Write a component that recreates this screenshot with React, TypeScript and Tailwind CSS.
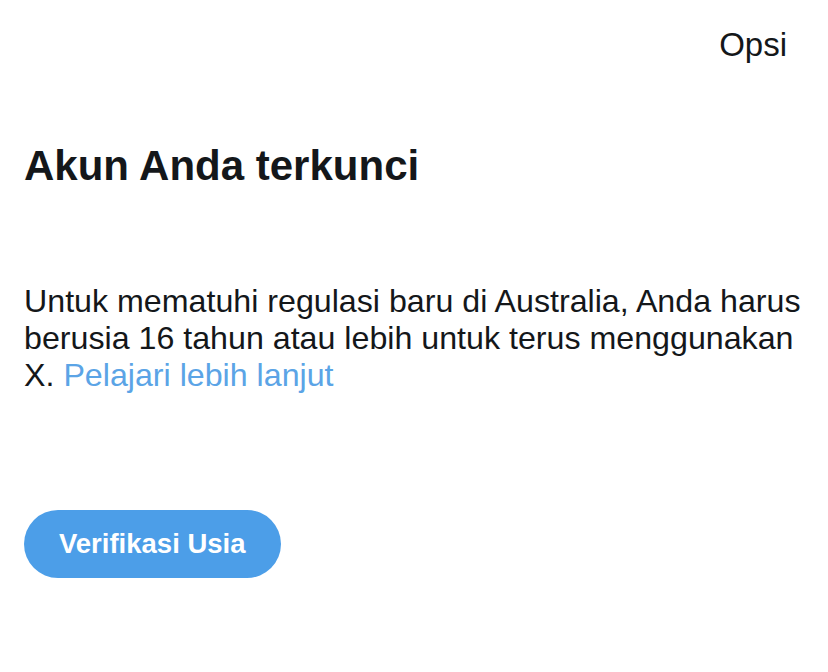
export default function App() {
  return (
    <div className="w-[828px] h-[672px] bg-white text-[#14171a]" style={{ fontFamily: '"Liberation Sans", Arial, Helvetica, sans-serif' }}>
      <div className="flex justify-end pt-[25px] pr-[41px]">
        <button className="text-[33px] leading-[40px] text-[#14171a]">Opsi</button>
      </div>
      <div className="pl-6 pr-4">
        <h1 className="mt-[76px] text-[42px] leading-[50px] font-bold">Akun Anda terkunci</h1>
        <p className="mt-[92px] text-[32.2px] leading-[37px]">
          Untuk mematuhi regulasi baru di Australia, Anda harus berusia 16 tahun atau lebih untuk terus menggunakan X.{' '}
          <a className="text-[#5ba4e6]">Pelajari lebih lanjut</a>
        </p>
        <button className="mt-[116px] h-[68px] px-[35px] rounded-full bg-[#4c9ee8] text-white text-[27.5px] font-bold">
          Verifikasi Usia
        </button>
      </div>
    </div>
  );
}
